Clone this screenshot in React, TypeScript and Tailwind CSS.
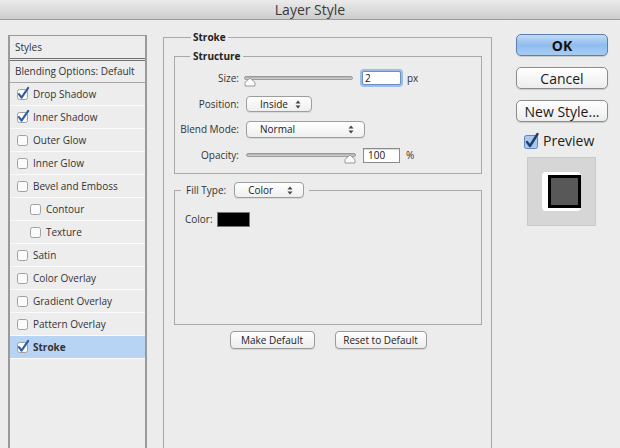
import type { ReactNode } from "react";

const FONT = "font-['Open_Sans','Liberation_Sans',sans-serif]";

type StyleItem = { label: string; checked?: boolean; indent?: boolean; active?: boolean };

const styleItems: StyleItem[] = [
  { label: "Drop Shadow", checked: true },
  { label: "Inner Shadow", checked: true },
  { label: "Outer Glow" },
  { label: "Inner Glow" },
  { label: "Bevel and Emboss" },
  { label: "Contour", indent: true },
  { label: "Texture", indent: true },
  { label: "Satin" },
  { label: "Color Overlay" },
  { label: "Gradient Overlay" },
  { label: "Pattern Overlay" },
  { label: "Stroke", checked: true, active: true },
];

function CheckBox({ checked, size = 12 }: { checked?: boolean; size?: number }) {
  return (
    <svg width={size} height={size} viewBox="0 0 12 12" className="shrink-0 overflow-visible">
      <rect x="0.5" y="1.5" width="10" height="10" rx="2" fill="#fbfbfb" stroke="#a0a0a0" />
      {checked && (
        <path
          d="M2 6.2 L4.5 9.6 L11.2 -0.2"
          fill="none"
          stroke="#2f5e9e"
          strokeWidth="2.1"
          strokeLinecap="round"
          strokeLinejoin="round"
        />
      )}
    </svg>
  );
}

function UpDown() {
  return (
    <svg width="6" height="9" viewBox="0 0 6 9" className="shrink-0">
      <path d="M0.5 3.5 L3 0.5 L5.5 3.5 Z" fill="#444" />
      <path d="M0.5 5.5 L3 8.5 L5.5 5.5 Z" fill="#444" />
    </svg>
  );
}

function Select({ value, className }: { value: string; className: string }) {
  return (
    <div
      className={`flex items-center justify-between rounded-[4px] border border-[#9d9d9d] bg-gradient-to-b from-white to-[#efefef] pl-[13px] pr-[10px] text-[10px] text-[#222] shadow-[0_1px_0_rgba(0,0,0,0.08)] ${className}`}
    >
      <span>{value}</span>
      <UpDown />
    </div>
  );
}

function Slider({ thumb, className }: { thumb: "left" | "right"; className: string }) {
  return (
    <div className={`relative flex items-center ${className}`}>
      <div className="h-[4px] w-full rounded-full border border-[#9a9a9a] bg-gradient-to-b from-[#a9a9a9] to-[#d8d8d8]" />
      <svg
        width="12"
        height="10"
        viewBox="0 0 12 10"
        className={`absolute top-[1px] ${thumb === "left" ? "left-0" : "right-0"}`}
      >
        <path d="M1 9 L1 5.5 L6 1 L11 5.5 L11 9 Z" fill="#fafafa" stroke="#9a9a9a" strokeLinejoin="round" />
      </svg>
    </div>
  );
}

function Row({ label, children, className = "" }: { label: string; children: ReactNode; className?: string }) {
  return (
    <div className={`flex items-center ${className}`}>
      <div className="w-[65px] pr-[1px] text-right text-[10px] text-[#333]">{label}</div>
      {children}
    </div>
  );
}

function Button({ children, className }: { children: ReactNode; className: string }) {
  return (
    <div
      className={`flex items-center justify-center rounded-[4px] border border-[#9a9a9a] bg-gradient-to-b from-white to-[#ececec] text-[10px] text-[#222] shadow-[0_1px_0_rgba(0,0,0,0.1)] ${className}`}
    >
      {children}
    </div>
  );
}

function DialogButton({ children, primary }: { children: ReactNode; primary?: boolean }) {
  return (
    <div
      className={`flex h-[22px] w-[92px] items-center justify-center rounded-[5px] border text-[14px] ${
        primary
          ? "border-[#5c7fae] bg-gradient-to-b from-[#c3dcf7] via-[#8fbcee] to-[#a7cdf4] font-bold text-[#111]"
          : "border-[#8c8c8c] bg-gradient-to-b from-white to-[#ededed] text-[#1a1a1a]"
      } shadow-[0_1px_1px_rgba(0,0,0,0.15)]`}
    >
      {children}
    </div>
  );
}

export default function App() {
  return (
    <div className={`h-[448px] w-[620px] overflow-hidden bg-[#ececec] ${FONT}`}>
      {/* title bar */}
      <div className="flex h-[20px] items-center justify-center border-b border-[#9b9b9b] bg-gradient-to-b from-[#ebebeb] to-[#cdcdcd] text-[14px] text-[#3a3a3a]">
        Layer Style
      </div>

      <div className="flex pl-[8px] pt-[15px]">
        {/* styles list */}
        <div className="h-[420px] w-[139px] shrink-0 border-x-2 border-t border-[#9a9a9a] bg-[#ededed]">
          <div className="flex h-[25px] items-center border-b-[3px] border-double border-[#6f6f6f] pl-[5px] text-[10px] text-[#333]">
            Styles
          </div>
          <div className="flex h-[22px] items-center border-b border-[#a5a5a5] pl-[5px] text-[10px] text-[#333]">
            Blending Options: Default
          </div>
          {styleItems.map((item) => (
            <div
              key={item.label}
              className={`flex h-[23px] items-center gap-[4px] border-b border-[#fbfbfb] text-[10px] text-[#333] ${
                item.indent ? "pl-[20px]" : "pl-[7px]"
              } ${item.active ? "bg-[#b8d4f5] font-bold text-[#111]" : ""}`}
            >
              <CheckBox checked={item.checked} />
              <span>{item.label}</span>
            </div>
          ))}
        </div>

        {/* stroke fieldset */}
        <fieldset className="ml-[16px] mt-[-5px] h-[440px] w-[329px] shrink-0 border border-[#a9a9a9] pl-[10px] pr-[9px]">
          <legend className="ml-[17px] px-[2px] text-[10px] font-bold text-[#222]">Stroke</legend>

          <fieldset className="mt-[4px] h-[125px] border border-[#a9a9a9]">
            <legend className="ml-[15px] px-[3px] text-[10px] font-bold text-[#222]">Structure</legend>
            <Row label="Size:" className="mt-[6px] h-[16px]">
              <Slider thumb="left" className="ml-[4px] w-[109px]" />
              <div className="ml-[9px] flex h-[14px] w-[39px] items-center rounded-[2px] border border-[#6d8fc0] bg-white pl-[2px] text-[10px] text-[#111] shadow-[0_0_0_2px_#9dbde6]">
                2
              </div>
              <span className="ml-[6px] text-[10px] text-[#333]">px</span>
            </Row>
            <Row label="Position:" className="mt-[10px] h-[16px]">
              <Select value="Inside" className="ml-[6px] h-[16px] w-[66px]" />
            </Row>
            <Row label="Blend Mode:" className="mt-[9px] h-[17px]">
              <Select value="Normal" className="ml-[6px] h-[17px] w-[119px]" />
            </Row>
            <Row label="Opacity:" className="mt-[9px] h-[16px]">
              <Slider thumb="right" className="ml-[6px] w-[110px]" />
              <div className="ml-[7px] flex h-[15px] w-[37px] items-center border border-[#8a8a8a] bg-white pl-[4px] text-[10px] text-[#111] shadow-[inset_0_1px_1px_rgba(0,0,0,0.15)]">
                100
              </div>
              <span className="ml-[6px] text-[10px] text-[#333]">%</span>
            </Row>
          </fieldset>

          <fieldset className="mt-[8px] h-[143px] border border-[#a9a9a9]">
            <legend className="ml-[6px] flex items-center px-[5px]">
              <span className="text-[10px] text-[#333]">Fill Type:</span>
              <Select value="Color" className="ml-[8px] h-[16px] w-[70px]" />
            </legend>
            <div className="ml-[10px] mt-[14px] flex items-center">
              <span className="text-[10px] text-[#333]">Color:</span>
              <div className="ml-[4px] h-[15px] w-[33px] border border-[#777] bg-black" />
            </div>
          </fieldset>

          <div className="mt-[6px] flex justify-center gap-[20px]">
            <Button className="h-[18px] w-[85px]">Make Default</Button>
            <Button className="h-[18px] w-[92px]">Reset to Default</Button>
          </div>
        </fieldset>

        {/* dialog buttons */}
        <div className="ml-[24px] mt-[-1px] flex w-[92px] shrink-0 flex-col">
          <DialogButton primary>OK</DialogButton>
          <div className="mt-[11px]">
            <DialogButton>Cancel</DialogButton>
          </div>
          <div className="mt-[11px]">
            <DialogButton>New Style...</DialogButton>
          </div>
          <div className="ml-[8px] mt-[8px] flex items-center gap-[4px] text-[14px] text-[#222]">
            <svg width="15" height="16" viewBox="0 0 15 16" className="overflow-visible">
              <rect x="0.5" y="2.5" width="13" height="13" rx="2" fill="#a9c8ef" stroke="#5f86bb" />
              <path
                d="M3 9 L6 13 L13.5 1"
                fill="none"
                stroke="#1e3e6e"
                strokeWidth="2.4"
                strokeLinecap="round"
                strokeLinejoin="round"
              />
            </svg>
            <span>Preview</span>
          </div>
          <div className="ml-[11px] mt-[6px] flex h-[69px] w-[69px] items-center justify-center border border-[#c9c9c9] bg-[#d6d6d6]">
            <div className="flex h-[39px] w-[39px] items-center justify-end rounded-[4px] bg-white">
              <div className="h-[33px] w-[33px] border-[3px] border-black bg-[#585858]" />
            </div>
          </div>
        </div>
      </div>
    </div>
  );
}
